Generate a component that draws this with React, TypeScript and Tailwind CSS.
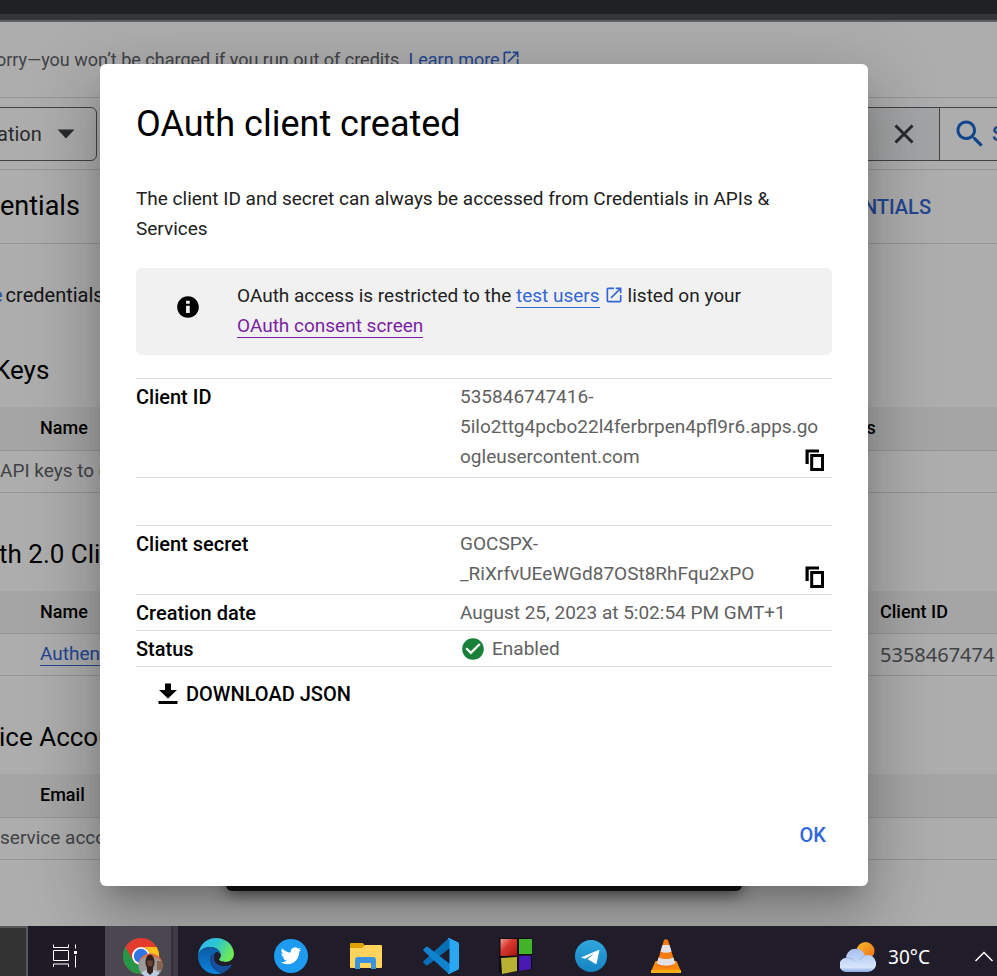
import type { ReactNode } from "react";

const openInNew =
  "M19 19H5V5h7V3H5c-1.11 0-2 .9-2 2v14c0 1.1.89 2 2 2h14c1.1 0 2-.9 2-2v-7h-2v7zM14 3v2h3.59l-9.83 9.83 1.41 1.41L19 6.41V10h2V3h-7z";
const searchPath =
  "M15.5 14h-.79l-.28-.27C15.41 12.59 16 11.11 16 9.5 16 5.91 13.09 3 9.5 3S3 5.91 3 9.5 5.91 16 9.5 16c1.61 0 3.09-.59 4.23-1.57l.27.28v.79l5 4.99L20.49 19l-4.99-5zm-6 0C7.01 14 5 11.99 5 9.5S7.01 5 9.5 5 14 7.01 14 9.5 11.99 14 9.5 14z";
const infoPath =
  "M12 2C6.48 2 2 6.48 2 12s4.48 10 10 10 10-4.48 10-10S17.52 2 12 2zm1.6 15.5h-3.4v-6.700h3.400V17.500zm0-8.500h-3.400V6.200h3.400V9z";
const copyPath = "M2.500 1.500H16v3H5.700V16H2.500V1.500zM7.200 6H21v17H7.200V6zm3 3v11H18V9h-7.800z";
const checkPath =
  "M12 2C6.48 2 2 6.48 2 12s4.480 10 10 10 10-4.480 10-10S17.520 2 12 2zm-2 15l-5-5 1.410-1.410L10 14.170l7.590-7.590L19 8l-9 9z";
const downloadPath = "M15 1.500H9V8H3l9 8.500L21 8h-6V1.500zM2.500 19v3h19v-3z";

function Glyph({ d, className }: { d: string; className: string }) {
  return (
    <svg viewBox="0 0 24 24" fill="currentColor" aria-hidden="true" className={className}>
      <path d={d} />
    </svg>
  );
}

function SectionHeading({ children }: { children: ReactNode }) {
  return (
    <h2 className="flex h-[98px] items-center pt-6 text-[26px] leading-9 whitespace-nowrap text-black">{children}</h2>
  );
}

type GridProps = { first: string; second?: string; children: ReactNode };

function ResourceTable({ first, second, children }: GridProps) {
  return (
    <table className="w-full table-fixed border-collapse text-left whitespace-nowrap">
      <thead>
        <tr className="h-[43px] border-b border-[#dadce0] bg-[#f4f4f4] text-lg leading-6 text-black">
          <th className="w-10 p-0" aria-label="Select" />
          <th className="p-0 font-medium">{first}</th>
          {second === "Restrictions" && <th className="w-[218px] p-0 font-medium">{second}</th>}
          {second === "Client ID" && <th className="w-[117px] p-0 font-medium">{second}</th>}
        </tr>
      </thead>
      <tbody>{children}</tbody>
    </table>
  );
}

function ConsolePage() {
  return (
    <div className="flex-1 overflow-hidden">
      <div className="flex h-[76px] items-center border-b border-[#dadce0] text-lg whitespace-nowrap text-[#5f6368]">
        <span className="-ml-1">
          orry—you won’t be charged if you run out of credits.{" "}
          <a href="#learn" className="text-[#3367d6]">
            Learn more
            <Glyph d={openInNew} className="mb-1 ml-px inline size-5" />
          </a>
        </span>
      </div>

      <div className="flex h-[72px] items-center justify-between border-b border-[#dadce0]">
        <button
          type="button"
          className="-ml-2 flex h-[54px] w-[105px] items-center gap-3 rounded-md border border-[#5f6368] pl-1 text-xl text-[#3c4043]"
        >
          ation
          <svg viewBox="0 0 24 24" className="size-6" aria-hidden="true">
            <path d="M3.500 7.500h17L12 16.500z" fill="#3c4043" />
          </svg>
        </button>
        <div className="flex h-[54px] w-[160px] items-center border-y border-[#5f6368] bg-[#eff2f4]">
          <button type="button" aria-label="Clear search" className="ml-auto px-5 text-[#3c4043]">
            <svg viewBox="0 0 30 30" className="size-[30px]" fill="none" stroke="currentColor" strokeWidth="3" aria-hidden="true">
              <path d="M6.500 6.500l17 17M23.500 6.500l-17 17" />
            </svg>
          </button>
          <button
            type="button"
            className="flex h-full w-[58px] items-center gap-1 overflow-hidden border-l border-[#5f6368] bg-white pl-3 text-xl font-medium text-[#1967d2]"
          >
            <Glyph d={searchPath} className="size-9 shrink-0" />S
          </button>
        </div>
      </div>

      <div className="flex h-[74px] items-center justify-between border-b border-[#dadce0] pr-[66px]">
        <h1 className="text-[27px] text-black">entials</h1>
        <a href="#delete" className="text-xl font-medium text-[#3367d6]">
          NTIALS
        </a>
      </div>

      <p className="mt-9 flex h-[30px] items-center text-xl whitespace-nowrap text-[#202124]">
        <a href="#create" className="-ml-2 mr-[3px] text-[#4285f4]">
          e
        </a>
        credentials
      </p>

      <div className="mt-[-1px]">
        <SectionHeading>
          <span className="-ml-1.5">Keys</span>
        </SectionHeading>
      </div>
      <ResourceTable first="Name" second="Restrictions">
        <tr className="h-[42px] border-b border-[#dadce0] text-[19px] text-[#5f6368]">
          <td className="p-0" colSpan={3}>
            API keys to display
          </td>
        </tr>
      </ResourceTable>

      <SectionHeading>
        <span className="-ml-px">th 2.0 Client IDs</span>
      </SectionHeading>
      <ResourceTable first="Name" second="Client ID">
        <tr className="h-[42px] border-b border-[#dadce0] text-[19px]">
          <td className="p-0" />
          <td className="p-0">
            <a href="#client" className="border-b border-[#3367d6] text-[#3367d6]">
              Authentication
            </a>
          </td>
          <td className="p-0 font-['Noto_Sans',sans-serif] text-xl text-[#5f6368]">5358467474</td>
        </tr>
      </ResourceTable>

      <SectionHeading>
        <span className="-ml-px">ice Accounts</span>
      </SectionHeading>
      <ResourceTable first="Email">
        <tr className="h-[42px] border-b border-[#dadce0] text-[19px] text-[#5f6368]">
          <td className="p-0" colSpan={2}>
            service accounts to display
          </td>
        </tr>
      </ResourceTable>
    </div>
  );
}

function DetailRow({ label, children }: { label: string; children: ReactNode }) {
  return (
    <tr className="border-y border-[#dadada]">
      <th scope="row" className="w-[324px] p-0 pt-[3px] text-left align-top text-xl leading-[30px] font-medium text-black">
        {label}
      </th>
      <td className="p-0 pt-[3px] text-[#616161]">{children}</td>
    </tr>
  );
}

function CopyableValue({ lines, label }: { lines: string[]; label: string }) {
  return (
    <div className="flex items-end justify-between pb-[5px]">
      <div>
        {lines.map((line) => (
          <div key={line} className="whitespace-nowrap">
            {line}
          </div>
        ))}
      </div>
      <button type="button" aria-label={label} className="-ml-6 mr-[5px] text-black">
        <Glyph d={copyPath} className="size-6" />
      </button>
    </div>
  );
}

function ClientDialog() {
  return (
    <div
      role="dialog"
      aria-labelledby="dialog-title"
      className="relative flex w-[768px] flex-col rounded-md bg-white px-9 pt-9 text-[19px] leading-[30px] text-[#212121] shadow-[0_16px_22px_-10px_rgba(0,0,0,0.2),0_36px_57px_4px_rgba(0,0,0,0.14),0_14px_69px_12px_rgba(0,0,0,0.12)]"
    >
      <h2 id="dialog-title" className="text-4xl leading-[48px] text-black">
        OAuth client created
      </h2>
      <p className="mt-9">
        The client ID and secret can always be accessed from Credentials in APIs &amp;
        <br />
        Services
      </p>

      <div className="mt-6 flex h-[87px] items-start rounded-md bg-[#f1f1f1] pt-[13px] pl-[39px]">
        <Glyph d={infoPath} className="mt-[13px] mr-9 size-[26px] text-black" />
        <p>
          OAuth access is restricted to the{" "}
          <a href="#test-users" className="border-b border-[#3367d6] text-[#3367d6]">
            test users
          </a>
          <Glyph d={openInNew} className="mx-1 mb-1 inline size-5 text-[#3367d6]" />
          listed on your
          <br />
          <a href="#consent" className="border-b border-[#7b1fa2] text-[#7b1fa2]">
            OAuth consent screen
          </a>
        </p>
      </div>

      <table className="mt-[23px] w-full table-fixed border-collapse">
        <tbody>
          <DetailRow label="Client ID">
            <CopyableValue
              label="Copy client ID"
              lines={["535846747416-", "5ilo2ttg4pcbo22l4ferbrpen4pfl9r6.apps.go", "ogleusercontent.com"]}
            />
          </DetailRow>
          <tr className="h-12">
            <td colSpan={2} />
          </tr>
          <DetailRow label="Client secret">
            <CopyableValue label="Copy client secret" lines={["GOCSPX-", "_RiXrfvUEeWGd87OSt8RhFqu2xPO"]} />
          </DetailRow>
          <DetailRow label="Creation date">
            <div className="pb-0.5">August 25, 2023 at 5:02:54 PM GMT+1</div>
          </DetailRow>
          <DetailRow label="Status">
            <div className="flex items-center gap-1.5 pb-0.5">
              <Glyph d={checkPath} className="size-[26px] text-[#188038]" />
              Enabled
            </div>
          </DetailRow>
        </tbody>
      </table>

      <button type="button" className="mt-3 ml-5 flex items-center gap-1.5 self-start text-xl leading-[30px] font-medium text-black">
        <Glyph d={downloadPath} className="size-6" />
        DOWNLOAD JSON
      </button>
      <button type="button" className="mt-[111px] mr-1.5 mb-9 self-end text-xl leading-[30px] font-medium text-[#3367d6]">
        OK
      </button>
    </div>
  );
}

function ChromeIcon() {
  return (
    <svg viewBox="0 0 40 38" className="h-[38px] w-10 shrink-0" aria-label="Chrome">
      <defs>
        <clipPath id="avatar">
          <circle cx="27.500" cy="27.500" r="12" />
        </clipPath>
      </defs>
      <circle cx="18" cy="18" r="18" fill="#e33b2e" />
      <path d="M18 9h15.600A18 18 0 0 1 18 36l8-13.500A9 9 0 0 0 18 9z" fill="#fbc116" />
      <path d="M2.400 9A18 18 0 0 0 18 36l8-13.500a9 9 0 0 1-15.800 0z" fill="#269746" />
      <circle cx="18" cy="18" r="9" fill="#fff" />
      <circle cx="18" cy="18" r="7.200" fill="#2f75e8" />
      <g clipPath="url(#avatar)">
        <path d="M15 15h25v25H15z" fill="#9c9a98" />
        <path d="M15 28q1-9 12-10 11 1 13 10V14H15z" fill="#e5683d" />
        <path d="M34 23h6v9h-6z" fill="#8a6250" />
        <path d="M17 40q1-7 6-8h8q6 1 7 8z" fill="#bccbe0" />
        <path d="M24 29h6v5l-3 3-3-3z" fill="#3b211b" />
        <ellipse cx="27" cy="24" rx="4.500" ry="7.500" fill="#33201b" />
        <path d="M24 23q3-1.500 6 0l-.5 4.500q-2.500 2-5 0z" fill="#684237" />
      </g>
    </svg>
  );
}

function EdgeIcon() {
  return (
    <svg viewBox="0 0 36 36" className="size-9" aria-label="Edge">
      <defs>
        <linearGradient id="edgeTop" x1="0" y1="0" x2="1" y2="0.400">
          <stop offset="0" stopColor="#37b7f3" />
          <stop offset="0.500" stopColor="#2bc4d5" />
          <stop offset="1" stopColor="#6ce858" />
        </linearGradient>
        <linearGradient id="edgeLeft" x1="0" y1="0" x2="0" y2="1">
          <stop offset="0" stopColor="#0c59a4" />
          <stop offset="1" stopColor="#0a84dd" />
        </linearGradient>
      </defs>
      <path d="M0 17C1 7 8.500 0 18 0c11 0 18 8 18 16 0 5-4 8-9 8-3.500 0-6-1.200-6-2.400 0-.8 1.700-1.700 1.700-4.600 0-4-4-8-10.700-8C6 9 1 13 0 17z" fill="url(#edgeTop)" />
      <path d="M0 17c1-5 6-8 12-8 6.500 0 10.500 4 10.700 7.600C16 12 11 18 13 25c1.500 5.500 6 9.500 11.500 10C21 36.200 19 36 17 36 7 35.500-.5 27 0 17z" fill="url(#edgeLeft)" />
      <path d="M18 14c-6 3-6 10-2.500 15.500 2 3.300 5.500 5.300 9 5.500 4-1.500 7-4.500 9-7.500.5-1-.3-1.200-1-.8C24 30.500 14 25 18 14z" fill="#174f9f" />
      <path d="M18 14c-4 4-2 11.500 3 13 4 1.300 8 1.200 11.500-.4-1 .2-3 .3-5.500-2.600-3.500 0-6-1.200-6-2.400 0-.8 1.700-1.700 1.700-4.600-1-2.200-3-3.400-4.700-3z" fill="#211c29" />
    </svg>
  );
}

function TwitterIcon() {
  return (
    <svg viewBox="0 0 34 34" className="size-[34px]" aria-label="Twitter">
      <circle cx="17" cy="17" r="17" fill="#1d9bf0" />
      <path
        transform="translate(6.700 6.500) scale(.86)"
        fill="#fff"
        d="M23.950 4.570a10 10 0 0 1-2.820.770 4.960 4.960 0 0 0 2.160-2.720c-.95.550-2.010.960-3.130 1.180a4.920 4.920 0 0 0-8.380 4.480C7.690 8.090 4.070 6.130 1.640 3.160a4.920 4.920 0 0 0 1.520 6.570 4.900 4.900 0 0 1-2.230-.610v.060a4.920 4.920 0 0 0 3.950 4.830 5 5 0 0 1-2.210.080 4.940 4.940 0 0 0 4.600 3.420A9.870 9.870 0 0 1 0 19.540a13.990 13.990 0 0 0 7.550 2.210c9.050 0 14-7.500 14-13.980 0-.210 0-.420-.020-.630a9.940 9.940 0 0 0 2.460-2.550z"
      />
    </svg>
  );
}

function FolderIcon() {
  return (
    <svg viewBox="0 0 32 28" className="h-7 w-8" aria-label="File Explorer">
      <path d="M0 2q0-1 1-1h12l2 3-2 3H0z" fill="#e0a100" />
      <path d="M0 6h12l3-3h16q1 0 1 1v21q0 1-1 1H1q-1 0-1-1z" fill="#ffd35c" />
      <path d="M5 27V18q0-3 3-3h15q3 0 3 3v9h-5v-6H10v6z" fill="#3a93dc" />
    </svg>
  );
}

function CodeIcon() {
  return (
    <svg viewBox="0 0 36 36" className="size-9" aria-label="Visual Studio Code">
      <path d="M27 0v10L5 27q-1 .8-2 0l-2.300-2q-1-1 0-2L25 .8q.8-.8 2-.8z" fill="#0a6fb5" />
      <path d="M27 36V26L5 9Q4 8.200 3 9L.7 11q-1 1 0 2L25 35.200q.8.800 2 .8z" fill="#0f83cd" />
      <path d="M26 0L35 4.200q1 .5 1 1.600v24.400q0 1.100-1 1.600L26 36q-1.500 0-1-1 1.500 0 1.500-2V3q0-2-1.500-2Q24.500 0 26 0z" fill="#29a7f2" />
    </svg>
  );
}

function BlocksIcon() {
  return (
    <svg viewBox="0 0 34 37" className="h-[37px] w-[34px]" aria-label="Code Blocks">
      <defs>
        <linearGradient id="redBlock" x1="0" y1="0" x2="1" y2="1">
          <stop offset="0" stopColor="#f0a096" />
          <stop offset="0.400" stopColor="#d8382e" />
          <stop offset="1" stopColor="#a81510" />
        </linearGradient>
      </defs>
      <path d="M0 0h33v31L2 36 0 34z" fill="#100c14" />
      <path d="M1.500 1h16.500v16.500l-16.500.5z" fill="url(#redBlock)" />
      <path d="M20 1h13v15H20z" fill="#43b32a" />
      <path d="M2 20l16-1v14L3 36z" fill="#b8b232" />
      <path d="M20 18l12-.5V31l-12 2z" fill="#4a18b2" />
    </svg>
  );
}

function TelegramIcon() {
  return (
    <svg viewBox="0 0 32 32" className="size-8" aria-label="Telegram">
      <defs>
        <linearGradient id="telegram" x1="0" y1="0" x2="0" y2="1">
          <stop offset="0" stopColor="#30a6de" />
          <stop offset="1" stopColor="#1584c1" />
        </linearGradient>
      </defs>
      <circle cx="16" cy="16" r="16" fill="url(#telegram)" />
      <path d="M6 17.500L23.500 10q1-.3.800.800l-2.600 12.400q-.3 1.300-1.500.5L12.500 19l7-5.500L10 18.800z" fill="#fff" />
    </svg>
  );
}

function ConeIcon() {
  return (
    <svg viewBox="0 0 30 34" className="h-[34px] w-[30px]" aria-label="VLC">
      <path d="M4.500 22h21L30 32.500q0 1.500-1 1.500H1q-1 0-1-1.500z" fill="#fb8a0c" />
      <path d="M0 31h30v3H0z" fill="#ffae1c" />
      <path d="M13 1q2-1.500 4 0l7.500 25q-9.500 6-19 0z" fill="#f47b12" />
      <path d="M11.500 6h7l2 6.500q-5.500 2.500-11 0z" fill="#e2e2e6" />
      <path d="M7.500 18.500q7.500 3 15 0l1.800 6q-9.300 4.500-18.600 0z" fill="#e2e2e6" />
    </svg>
  );
}

function WeatherIcon() {
  return (
    <svg viewBox="0 0 36 30" className="h-[30px] w-9" aria-hidden="true">
      <defs>
        <linearGradient id="sun" x1="0" y1="0" x2="1" y2="1">
          <stop offset="0" stopColor="#f8bc2c" />
          <stop offset="1" stopColor="#ef6c16" />
        </linearGradient>
        <linearGradient id="cloud" x1="0" y1="0" x2="0" y2="1">
          <stop offset="0" stopColor="#a5bef0" />
          <stop offset="0.800" stopColor="#d6e6fa" />
          <stop offset="1" stopColor="#86a8e4" />
        </linearGradient>
      </defs>
      <circle cx="25.500" cy="9" r="9" fill="url(#sun)" />
      <path d="M7 30a7 7 0 0 1-1-14.200C6.500 10 11 6.700 15.500 6.700c5 0 8.500 3 9.300 6.800A8.500 8.500 0 1 1 28 30z" fill="url(#cloud)" />
      <path d="M6 15.800q5-1 8.500 3M24.800 13.500q-4 1-5.300 5" fill="none" stroke="#7f9fe0" strokeWidth="1" opacity=".6" />
    </svg>
  );
}

function TaskButton({ children }: { children: ReactNode }) {
  return (
    <button type="button" className="flex w-[75px] items-center justify-center pt-2.5">
      {children}
    </button>
  );
}

function Taskbar() {
  return (
    <div className="flex h-[50px] shrink-0 items-stretch overflow-hidden bg-[#211c2a]">
      <div className="w-7 border-t-2 border-r-2 border-[#58585a] bg-[#333333]" />
      <button type="button" aria-label="Task view" className="flex w-[77px] items-center justify-center bg-[#1e1a26] pt-2.5 pr-1">
        <svg viewBox="0 0 26 24" className="h-6 w-[26px]" fill="none" stroke="#fff" aria-hidden="true">
          <path d="M1.500 .5v3h15v-3M1.500 6.500h15v10h-15zM1.500 23v-3h15v3M23.500 .5v4M23.500 11.500v12" />
          <path d="M22 7h3v3h-3z" fill="#fff" stroke="none" />
        </svg>
      </button>
      <button type="button" className="flex w-[66px] items-center bg-[#4b4751] pt-3 pl-[18px]">
        <ChromeIcon />
      </button>
      <div className="w-[7px] border-l-2 border-[#343238] bg-[#3d3a43]" />
      <TaskButton><EdgeIcon /></TaskButton>
      <TaskButton><TwitterIcon /></TaskButton>
      <TaskButton><FolderIcon /></TaskButton>
      <TaskButton><CodeIcon /></TaskButton>
      <TaskButton><BlocksIcon /></TaskButton>
      <TaskButton><TelegramIcon /></TaskButton>
      <TaskButton><ConeIcon /></TaskButton>
      <div className="ml-auto flex items-center gap-3 pt-3 font-['Noto_Sans',sans-serif] text-[19px] text-white">
        <WeatherIcon />
        <span>30°C</span>
        <svg viewBox="0 0 20 12" className="mr-[3px] ml-8 h-3 w-5" fill="none" stroke="#fff" strokeWidth="1.500" aria-label="Show hidden icons">
          <path d="M1.500 10L10 1.500 18.500 10" />
        </svg>
      </div>
    </div>
  );
}

export default function App() {
  return (
    <div className="flex h-screen flex-col overflow-hidden bg-white font-[Roboto,sans-serif]">
      <div className="h-[22px] shrink-0 border-b-2 border-[#5f6063] bg-[#35363a]">
        <div className="h-3.5 bg-[#202124]" />
      </div>
      <main className="relative flex min-h-0 flex-1 flex-col overflow-hidden">
        <ConsolePage />
        <div className="absolute inset-0 flex items-start justify-center bg-black/32 pt-[42px] pr-[29px]">
          <div className="absolute bottom-[35px] left-[226px] h-12 w-[516px] rounded-md bg-[#141414] shadow-[0_4px_15px_rgba(0,0,0,0.5)]" />
          <ClientDialog />
        </div>
      </main>
      <Taskbar />
    </div>
  );
}
